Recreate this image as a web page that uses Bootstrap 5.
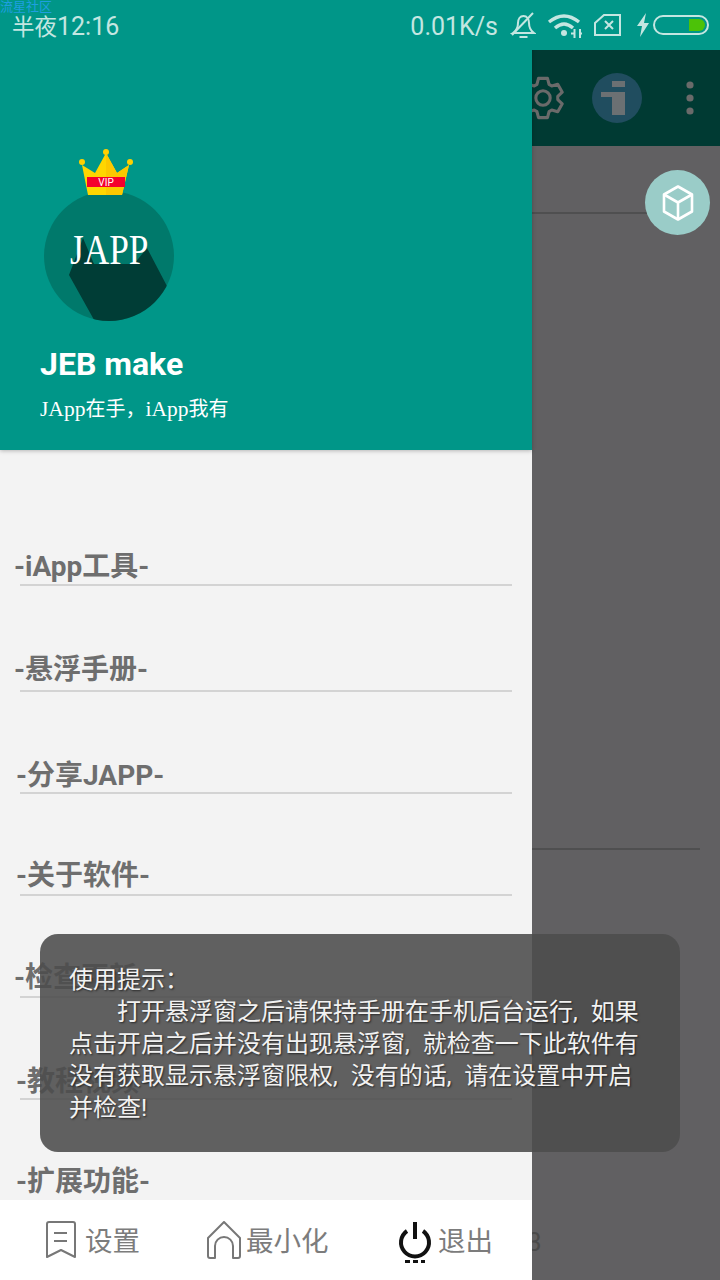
<!DOCTYPE html>
<html lang="zh-Hans">
<head>
  <meta charset="UTF-8">
  <meta name="viewport" content="width=device-width, initial-scale=1.0">
  <title>JAPP</title>
  <link href="https://cdn.jsdelivr.net/npm/bootstrap@5.3.3/dist/css/bootstrap.min.css" rel="stylesheet">
  <style>
    body { margin: 0; background: #616161; font-family: Roboto, "Noto Sans CJK SC", sans-serif; }
    .phone { position: relative; width: 720px; height: 1280px; overflow: hidden; background: #616062; }
    .status-strip { position: relative; z-index: 5; height: 50px; background: #009688; color: #c4e6e1; font-size: 25px; padding: 0 11px 0 12px; }
    .site-tag { position: absolute; left: 0; top: 0; font-size: 13px; line-height: 13px; color: #1f9fe0; }
    .clock-text { padding-top: 4px; }
    .clock-text b { font-weight: 400; font-size: 22.5px; }
    .speed-text { padding-top: 4px; margin-right: 12px; }
    .app-strip { height: 96px; background: #003a33; padding-left: 520px; }
    .info-dot { width: 50px; height: 50px; margin-left: 26px; background: #204d5f; border-radius: 50%; }
    .info-glyph { margin-right: 8px; }
    .more-dots { margin-left: 43px; }
    .rear-rule { position: absolute; left: 532px; width: 168px; height: 2px; background: #4f4f50; }
    .rear-rule-a { top: 212px; width: 130px; }
    .rear-rule-b { top: 848px; }
    .rear-num { position: absolute; left: 527px; top: 1227px; font-size: 26px; line-height: 30px; color: #4a4a4a; }
    .float-btn { position: absolute; left: 645px; top: 170px; width: 65px; height: 65px; border-radius: 50%; background: #9accc8; }
    .side-panel { position: absolute; left: 0; top: 0; width: 532px; height: 1280px; background: #f3f3f3; }
    .panel-head { height: 450px; background: #009688; padding: 191px 0 0 40px; box-shadow: 0 1px 4px rgba(0,0,0,.25); color: #fff; }
    .avatar-box { position: relative; width: 130px; height: 130px; margin-left: 4px; border-radius: 50%; }
    .avatar-art { position: absolute; left: 0; top: 0; }
    .crown-art { position: absolute; left: 34px; top: -43px; }
    .avatar-word { position: absolute; left: 26px; top: 34px; font-family: "Liberation Serif", serif; font-size: 43px; line-height: 50px; white-space: nowrap; transform: scaleX(.82); transform-origin: left; }
    .user-name { font-size: 32px; font-weight: 700; line-height: 38px; margin-top: 24px; }
    .user-sub { font-family: "Noto Sans CJK TC", sans-serif; font-size: 20px; line-height: 26px; margin-top: 12px; white-space: nowrap; }
    .user-sub i { font-family: "Liberation Serif", serif; font-style: normal; font-size: 21.5px; }
    .menu-box { padding-top: 94px; }
    .menu-row { margin-left: 20px; width: 492px; height: 42px; margin-top: 60px; border-bottom: 2px solid #d3d3d3; color: #6e6e6e; font-size: 28px; font-weight: 700; line-height: 30px; padding-bottom: 3px; white-space: nowrap; }
    .menu-row:first-child { margin-top: 0; padding-bottom: 2px; }
    .menu-row:nth-child(2) { margin-top: 64px; padding-bottom: 5px; }
    .menu-row:nth-child(3), .menu-row:nth-child(6) { padding-bottom: 1px; }
    .menu-row span { margin-left: -6px; }
    .menu-row.shift-r span { margin-left: -4px; }
    .bottom-tabs { position: absolute; left: 0; bottom: 0; width: 532px; height: 80px; background: #fff; color: #7c7c7c; font-size: 27.5px; line-height: 34px; }
    .tab-one { position: absolute; top: 0; height: 80px; }
    .tab-a { left: 45px; } .tab-b { left: 206px; } .tab-c { left: 398px; }
    .tab-one span { padding-top: 4px; }
    .tab-c span { margin-left: 2px; }
    .power-dots { position: absolute; left: 7px; top: 60px; width: 20px; height: 3px; background: repeating-linear-gradient(90deg, #111 0 5px, transparent 5px 8px); }
    .hint-toast { position: absolute; z-index: 6; left: 40px; top: 934px; width: 640px; height: 218px; border-radius: 18px; background: rgba(77,77,77,.885); color: #f2f2f2; font-size: 24px; line-height: 32px; padding: 30px 29px 0; word-spacing: 7px; text-shadow: 1px 1px 2px rgba(0,0,0,.6); white-space: nowrap; }
    .hint-indent { padding-left: 48px; }
    .mg-11 { margin-left: 11px; } .mg-12 { margin-left: 12px; } .mg-14 { margin-left: 14px; } .mg-3 { margin-left: 3px; }
  </style>
</head>
<body>
<div class="phone">

  <!-- 状态栏 -->
  <div class="status-strip d-flex align-items-center justify-content-between">
    <div class="site-tag">流星社区</div>
    <div class="clock-text"><b>半夜</b>12:16</div>
    <div class="d-flex align-items-center">
      <span class="speed-text">0.01K/s</span>
      <svg width="26" height="26" viewBox="0 0 26 26" fill="none" stroke="#c4e6e1" stroke-width="2"><path d="M3 21c3-2 5-5 5-10 0-4 2-7 5.500-7s5.500 3 5.500 7c0 5 2 8 5 10z"/><path d="M9.500 25h8"/><path d="M2 23L23 1"/></svg>
      <svg class="mg-11" width="35" height="26" viewBox="0 0 35 26" fill="none" stroke="#c4e6e1" stroke-width="3.400"><path d="M2 10Q17-2 32 10"/><path d="M8 16Q17 8 26 16"/><circle cx="17" cy="21" r="3" fill="#c4e6e1" stroke="none"/><path d="M27.500 17v9M33 17v9" stroke-width="2"/><path d="M24 21.500h3M33 21.500h2" stroke-width="2"/></svg>
      <svg class="mg-12" width="28" height="22" viewBox="0 0 28 22" fill="none" stroke="#c4e6e1" stroke-width="2"><path d="M1 9L10 1h16v20H1z"/><path d="M11 7l8 8M19 7l-8 8"/></svg>
      <svg class="mg-14" width="14" height="24" viewBox="0 0 14 24" fill="#c4e6e1"><path d="M10 0L1 13h5l-2 11 9-14H8z"/></svg>
      <svg class="mg-3" width="56" height="20" viewBox="0 0 56 20" fill="none"><rect x="1" y="1" width="54" height="18" rx="9" stroke="#c4e6e1" stroke-width="2"/><path d="M36 4h10a6 6 0 0 1 0 12H36z" fill="#4cc208"/></svg>
    </div>
  </div>

  <!-- 抽屉后面的页面 -->
  <div class="app-strip d-flex align-items-center">
    <svg width="46" height="46" viewBox="-24 -24 48 48" fill="none" stroke="#6a6a6a" stroke-width="3.200" stroke-linejoin="round"><path d="M-6.300-14.200L-4.700-20.500 4.700-20.500 6.300-14.200 9.100-12.500 15.400-14.300 20.100-6.100 15.400-1.600 15.400 1.600 20.100 6.100 15.400 14.300 9.100 12.500 6.300 14.200 4.700 20.500-4.700 20.500-6.300 14.200-9.100 12.500-15.400 14.300-20.100 6.100-15.400 1.600-15.400-1.600-20.100-6.100-15.400-14.300-9.100-12.500z"/><circle r="7.500"/></svg>
    <div class="info-dot d-flex align-items-center justify-content-center">
      <svg class="info-glyph" width="24" height="34" viewBox="0 0 24 34" fill="#6b7073"><rect x="11" y="0" width="13" height="6"/><path d="M0 11h24v23H11V16H0z"/></svg>
    </div>
    <svg class="more-dots" width="10" height="36" viewBox="0 0 10 36" fill="#6a6a6a"><circle cx="5" cy="5" r="3.600"/><circle cx="5" cy="18" r="3.600"/><circle cx="5" cy="31" r="3.600"/></svg>
  </div>
  <div class="rear-rule rear-rule-a"></div>
  <div class="rear-rule rear-rule-b"></div>
  <div class="rear-num">3</div>
  <div class="float-btn d-flex align-items-center justify-content-center">
    <svg width="32" height="36" viewBox="0 0 32 36" fill="none" stroke="#fff" stroke-width="2.600" stroke-linejoin="round"><path d="M2 9.500L16 1.500l14 8v17l-14 8-14-8z"/><path d="M2 9.500l14 8 14-8M16 17.500v17"/></svg>
  </div>

  <!-- 侧边抽屉 -->
  <aside class="side-panel">
    <div class="panel-head">
      <div class="avatar-box">
        <svg class="avatar-art" width="130" height="130" viewBox="0 0 130 130"><defs><clipPath id="avatarClip"><circle cx="65" cy="65" r="65"/></clipPath></defs><circle cx="65" cy="65" r="65" fill="#00796b"/><path d="M25 84L39 47 50 73 90 73 103 57 124 97 135 140 60 150 49 127z" fill="#003d36" clip-path="url(#avatarClip)"/></svg>
        <svg class="crown-art" width="56" height="48" viewBox="0 0 56 48"><path d="M4 17l13 8L28 5l11 20 12-8-7 30H10z" fill="#ffd600"/><path d="M28 5l11 20 12-8-7 30H28z" fill="#fcc800"/><rect x="9" y="29" width="38" height="10" fill="#f5002d"/><circle cx="28" cy="4" r="3" fill="#ffd000"/><circle cx="4" cy="14" r="3" fill="#ffd000"/><circle cx="52" cy="14" r="3" fill="#ffd000"/><text x="28" y="38" font-family="Roboto, sans-serif" font-size="10" fill="#fff" text-anchor="middle">VIP</text></svg>
        <div class="avatar-word">JAPP</div>
      </div>
      <div class="user-name">JEB make</div>
      <div class="user-sub"><i>JApp</i>在手，<i>iApp</i>我有</div>
    </div>

    <ul class="menu-box list-unstyled mb-0">
      <li class="menu-row d-flex align-items-end"><span>-iApp工具-</span></li>
      <li class="menu-row d-flex align-items-end"><span>-悬浮手册-</span></li>
      <li class="menu-row shift-r d-flex align-items-end"><span>-分享JAPP-</span></li>
      <li class="menu-row shift-r d-flex align-items-end"><span>-关于软件-</span></li>
      <li class="menu-row d-flex align-items-end"><span>-检查更新-</span></li>
      <li class="menu-row shift-r d-flex align-items-end"><span>-教程视频-</span></li>
      <li class="menu-row shift-r d-flex align-items-end"><span>-扩展功能-</span></li>
    </ul>

    <div class="bottom-tabs">
      <div class="tab-one tab-a d-flex align-items-center">
        <svg width="32" height="38" viewBox="0 0 32 38" fill="none" stroke="#777" stroke-width="2" stroke-linejoin="round" class="me-2"><path d="M2 3a2 2 0 0 1 2-2h24a2 2 0 0 1 2 2v33l-14-7-14 7z"/><path d="M9 12h13M9 20h13"/></svg>
        <span>设置</span>
      </div>
      <div class="tab-one tab-b d-flex align-items-center">
        <svg width="36" height="38" viewBox="0 0 36 38" fill="none" stroke="#777" stroke-width="2" stroke-linejoin="round" class="me-1"><path d="M2 17L18 1l16 16v18a2 2 0 0 1-2 2h-5V25a9 9 0 0 0-18 0v12H4a2 2 0 0 1-2-2z"/></svg>
        <span>最小化</span>
      </div>
      <div class="tab-one tab-c d-flex align-items-center">
        <svg width="34" height="38" viewBox="0 0 34 38" fill="none" stroke="#111" stroke-width="4" class="me-1"><path d="M9 10a14 14 0 1 0 16 0"/><path d="M17 1v17"/></svg>
        <span>退出</span>
        <div class="power-dots"></div>
      </div>
    </div>
  </aside>

  <!-- 使用提示 -->
  <div class="hint-toast">
    <div>使用提示：</div>
    <div class="hint-indent">打开悬浮窗之后请保持手册在手机后台运行, 如果</div>
    <div>点击开启之后并没有出现悬浮窗, 就检查一下此软件有</div>
    <div>没有获取显示悬浮窗限权, 没有的话, 请在设置中开启</div>
    <div>并检查!</div>
  </div>

</div>
<script src="https://cdn.jsdelivr.net/npm/bootstrap@5.3.3/dist/js/bootstrap.bundle.min.js"></script>
</body>
</html>
